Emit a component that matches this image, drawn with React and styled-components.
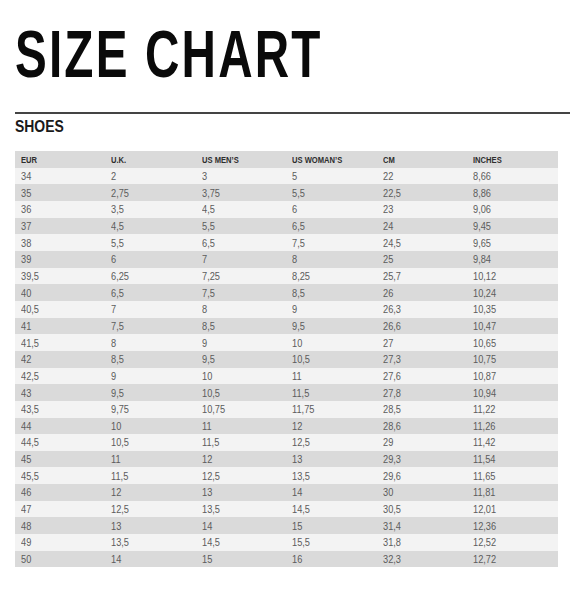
import React from 'react';
import styled, { createGlobalStyle } from 'styled-components';

const GlobalStyle = createGlobalStyle`
  html, body {
    margin: 0;
    padding: 0;
    background: #ffffff;
  }
`;

const Page = styled.div`
  width: 570px;
  height: 610px;
  box-sizing: border-box;
  padding: 18px 0 0 15px;
  font-family: "Liberation Sans", Arial, sans-serif;
  color: #111;
`;

// narrow DIN-like look: squeeze the glyphs horizontally
const Squeeze = styled.span`
  display: inline-block;
  white-space: nowrap;
  transform: scaleX(${p => p.$sx || 1});
  transform-origin: left center;
`;

const Title = styled.h1`
  margin: 0;
  font-size: 66px;
  font-weight: 700;
  line-height: 72px;
  letter-spacing: 3px;
  color: #0a0a0a;
`;

const Rule = styled.div`
  margin-top: 22px;
  height: 2px;
  background: #444;
`;

const Section = styled.h2`
  margin: 4px 0 0 0;
  font-size: 17px;
  font-weight: 700;
  line-height: 18px;
  color: #1a1a1a;
`;

const Table = styled.div`
  margin-top: 15px;
  width: 543px;
  display: grid;
  grid-template-columns: repeat(6, 1fr);
`;

const Row = styled.div`
  display: contents;
`;

const Cell = styled.div`
  height: 16.67px;
  box-sizing: border-box;
  padding-left: ${p => (p.$first ? '6px' : '5.5px')};
  display: flex;
  align-items: center;
  overflow: hidden;
  font-size: ${p => (p.$head ? '9.5px' : '10.5px')};
  font-weight: ${p => (p.$head ? 700 : 400)};
  color: ${p => (p.$head ? '#2e2e2e' : '#5c5c5c')};
  background: ${p => (p.$dark ? '#dadada' : '#f3f3f3')};
`;

const headers = ['EUR', 'U.K.', 'US MEN\u2019S', 'US WOMAN\u2019S', 'CM', 'INCHES'];

const rows = [
  ['34', '2', '3', '5', '22', '8,66'],
  ['35', '2,75', '3,75', '5,5', '22,5', '8,86'],
  ['36', '3,5', '4,5', '6', '23', '9,06'],
  ['37', '4,5', '5,5', '6,5', '24', '9,45'],
  ['38', '5,5', '6,5', '7,5', '24,5', '9,65'],
  ['39', '6', '7', '8', '25', '9,84'],
  ['39,5', '6,25', '7,25', '8,25', '25,7', '10,12'],
  ['40', '6,5', '7,5', '8,5', '26', '10,24'],
  ['40,5', '7', '8', '9', '26,3', '10,35'],
  ['41', '7,5', '8,5', '9,5', '26,6', '10,47'],
  ['41,5', '8', '9', '10', '27', '10,65'],
  ['42', '8,5', '9,5', '10,5', '27,3', '10,75'],
  ['42,5', '9', '10', '11', '27,6', '10,87'],
  ['43', '9,5', '10,5', '11,5', '27,8', '10,94'],
  ['43,5', '9,75', '10,75', '11,75', '28,5', '11,22'],
  ['44', '10', '11', '12', '28,6', '11,26'],
  ['44,5', '10,5', '11,5', '12,5', '29', '11,42'],
  ['45', '11', '12', '13', '29,3', '11,54'],
  ['45,5', '11,5', '12,5', '13,5', '29,6', '11,65'],
  ['46', '12', '13', '14', '30', '11,81'],
  ['47', '12,5', '13,5', '14,5', '30,5', '12,01'],
  ['48', '13', '14', '15', '31,4', '12,36'],
  ['49', '13,5', '14,5', '15,5', '31,8', '12,52'],
  ['50', '14', '15', '16', '32,3', '12,72'],
];

export default function App() {
  return (
    <Page>
      <GlobalStyle />
      <Title>
        <Squeeze $sx={0.722}>SIZE CHART</Squeeze>
      </Title>
      <Rule />
      <Section>
        <Squeeze $sx={0.82}>SHOES</Squeeze>
      </Section>
      <Table>
        <Row>
          {headers.map((h, i) => (
            <Cell key={h} $head $dark $first={i === 0}>
              <Squeeze $sx={0.8}>{h}</Squeeze>
            </Cell>
          ))}
        </Row>
        {rows.map((r, ri) => (
          <Row key={r[0]}>
            {r.map((v, ci) => (
              <Cell key={ci} $dark={ri % 2 === 1} $first={ci === 0}>
                <Squeeze $sx={0.88}>{v}</Squeeze>
              </Cell>
            ))}
          </Row>
        ))}
      </Table>
    </Page>
  );
}
